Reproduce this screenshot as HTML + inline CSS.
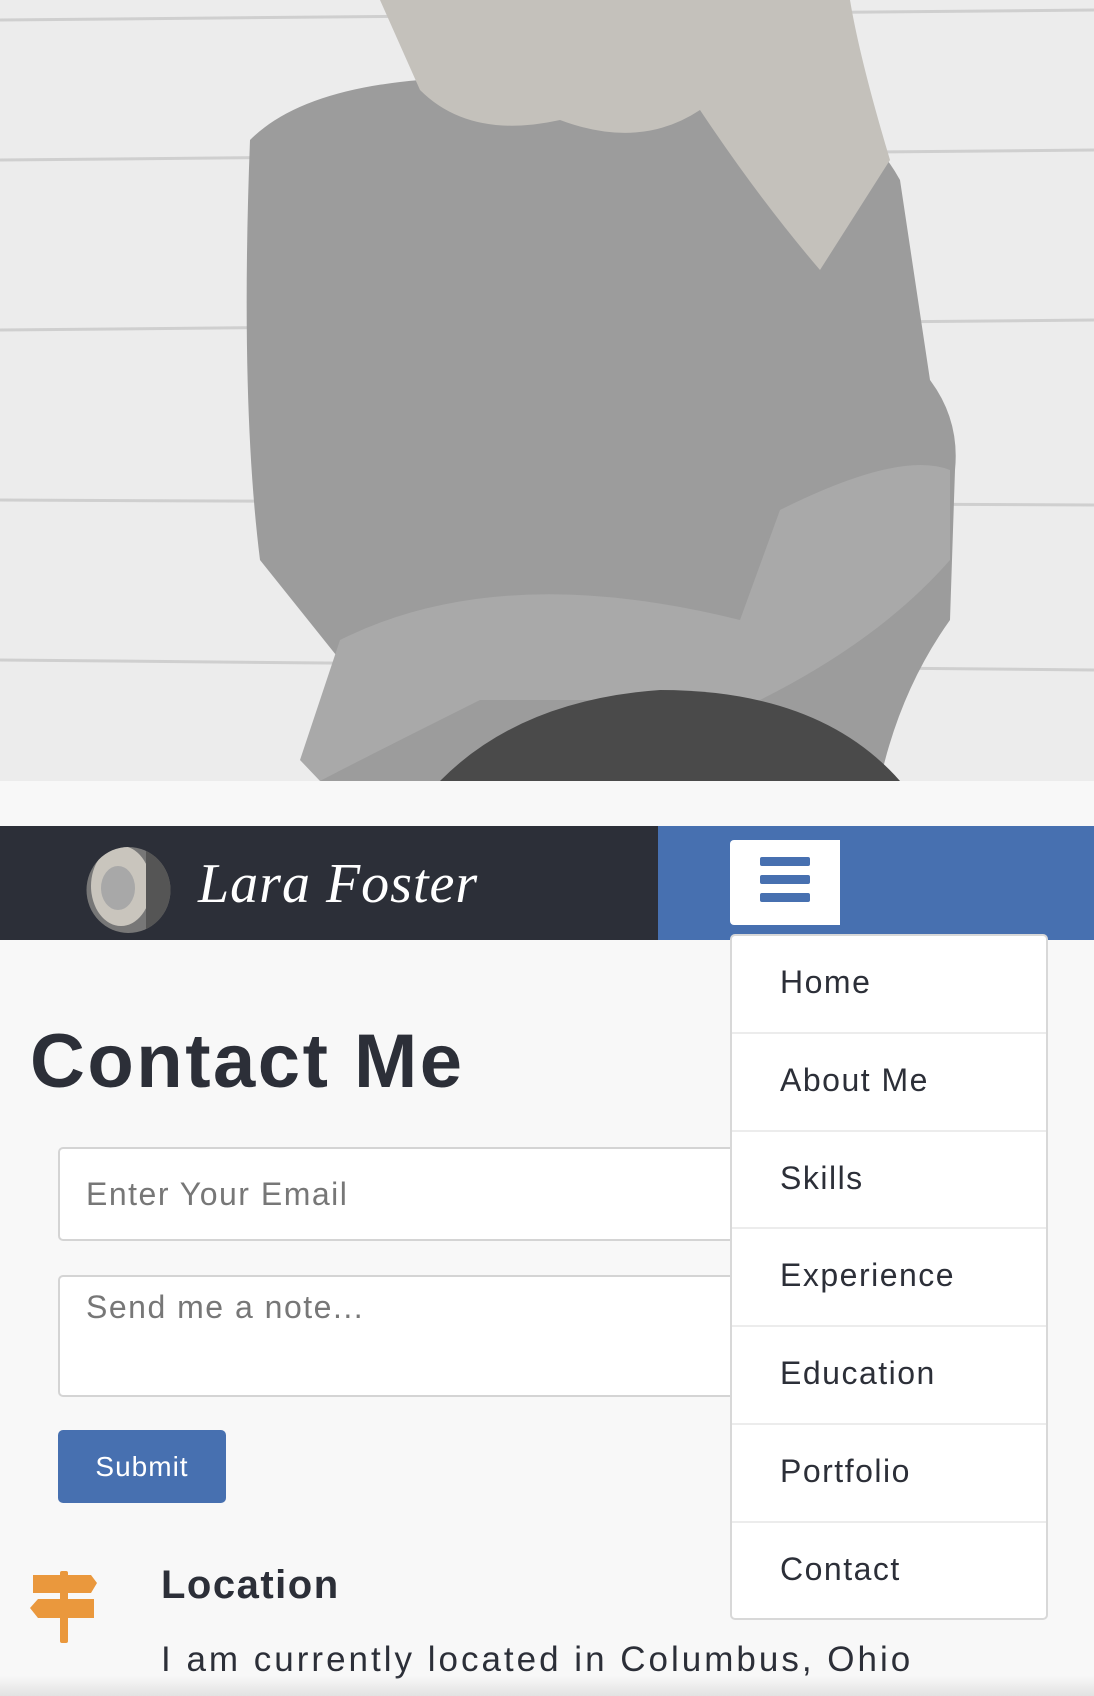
<!DOCTYPE html>
<html><head><meta charset="utf-8"><style>
*{margin:0;padding:0;box-sizing:border-box}
body{width:1094px;height:1696px;overflow:hidden;background:#f8f8f8;font-family:"Liberation Sans",sans-serif;position:relative;color:#2c2f38}
.abs{position:absolute}
.nav-l{left:0;top:826px;width:658px;height:114px;background:#2c2f38}
.nav-r{left:658px;top:826px;width:436px;height:114px;background:#4770b0}
.burger{left:730px;top:840px;width:110px;height:85px;background:#fff;border-radius:4px 0 0 4px}
.burger i{position:absolute;left:30px;width:50px;height:9px;background:#4770b0;border-radius:2px}
.dd{left:730px;top:934px;width:318px;height:686px;background:#fff;border:2px solid #d8d8d8;border-radius:5px}
.dd div{height:97.8px;border-bottom:2px solid #ececec;padding-left:48px;line-height:92px;font-size:32px;color:#2c2f38;letter-spacing:1.5px}
.dd div:last-child{border-bottom:none}
.inp{background:#fff;border:2px solid #d4d4d4;border-radius:5px;font-size:32px;color:#777;padding-left:26px;letter-spacing:1.5px}
</style></head><body>
<svg class="abs" style="left:0;top:0" width="1094" height="781" viewBox="0 0 1094 781">
<rect width="1094" height="781" fill="#ececec"/>
<g stroke="#cfcfcf" stroke-width="3">
<line x1="0" y1="160" x2="1094" y2="150"/><line x1="0" y1="330" x2="1094" y2="320"/><line x1="0" y1="500" x2="1094" y2="505"/><line x1="0" y1="660" x2="1094" y2="670"/><line x1="0" y1="20" x2="1094" y2="10"/>
</g>
<path d="M250 140 Q300 90 420 80 L720 70 Q850 90 900 180 L930 380 Q960 420 955 470 L950 620 Q900 690 880 781 L320 781 Q330 700 340 660 L260 560 Q240 400 250 140Z" fill="#9c9c9c"/>
<path d="M380 0 L420 90 Q470 140 560 120 Q640 150 700 110 Q760 200 820 270 L890 160 Q860 60 850 0Z" fill="#c4c1bb"/>
<path d="M340 640 Q500 560 740 620 L780 510 Q900 450 950 470 L950 560 Q880 640 760 700 L480 700 Q360 760 320 781 L300 760Z" fill="#a9a9a9"/>
<path d="M440 781 Q520 700 660 690 Q820 690 900 781Z" fill="#4a4a4a"/>
</svg>
<div class="abs nav-l"></div>
<div class="abs nav-r"></div>
<svg class="abs" style="left:86px;top:846px" width="85" height="88"><defs><clipPath id="c"><ellipse cx="42.5" cy="44" rx="42" ry="43"/></clipPath></defs><g clip-path="url(#c)"><rect width="85" height="88" fill="#777"/><ellipse cx="35" cy="40" rx="30" ry="40" fill="#c9c5bd"/><ellipse cx="32" cy="42" rx="17" ry="22" fill="#a8a8a8"/><rect x="60" y="0" width="25" height="88" fill="#555"/></g></svg>
<div class="abs" style="left:198px;top:852px;font-family:'Liberation Serif',serif;font-style:italic;font-size:56px;color:#fff;letter-spacing:1px">Lara Foster</div>
<div class="abs burger"><i style="top:17px"></i><i style="top:35px"></i><i style="top:53px"></i></div>
<div class="abs" style="left:30px;top:1018px;font-size:76px;font-weight:bold;color:#2c2f38;letter-spacing:2.5px">Contact Me</div>
<div class="abs inp" style="left:58px;top:1147px;width:980px;height:94px;line-height:90px">Enter Your Email</div>
<div class="abs inp" style="left:58px;top:1275px;width:980px;height:122px;padding-top:12px">Send me a note...</div>
<div class="abs" style="left:58px;top:1430px;width:168px;height:73px;background:#4770b0;border-radius:5px;color:#fff;font-size:28px;text-align:center;line-height:73px;letter-spacing:1px">Submit</div>
<svg class="abs" style="left:28px;top:1571px" width="72" height="72" viewBox="0 0 72 72">
<g fill="#ea983d"><rect x="32" y="0" width="8" height="72" rx="2"/><path d="M5 4 H63 L69 12 L63 22 H5Z"/><path d="M66 28 H10 L2 37 L10 47 H66Z"/></g>
</svg>
<div class="abs" style="left:161px;top:1563px;font-size:40px;font-weight:bold;color:#2c2f38;letter-spacing:1.5px">Location</div>
<div class="abs" style="left:161px;top:1640px;font-size:35px;color:#2c2f38;letter-spacing:3px">I am currently located in Columbus, Ohio</div>
<div class="abs" style="left:0;top:1676px;width:1094px;height:20px;background:linear-gradient(#f8f8f800,#e2e2e2)"></div>
<div class="abs dd"><div>Home</div><div>About Me</div><div>Skills</div><div>Experience</div><div>Education</div><div>Portfolio</div><div>Contact</div></div>
</body></html>
